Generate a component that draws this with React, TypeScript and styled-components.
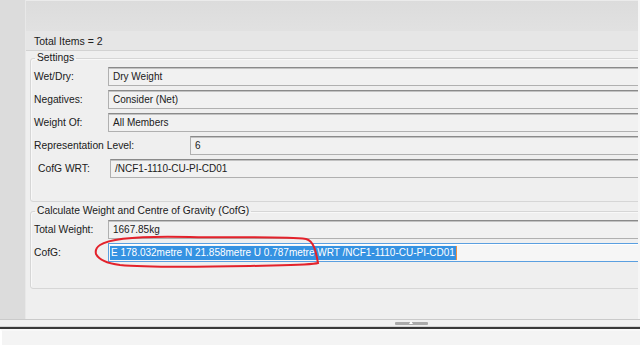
import React from 'react';
import styled, { createGlobalStyle } from 'styled-components';

const GlobalStyle = createGlobalStyle`
  html, body {
    margin: 0;
    padding: 0;
    overflow: hidden;
    background: #efefef;
  }
  body {
    font-family: "Liberation Sans", Arial, sans-serif;
    font-size: 10px;
    color: #202020;
  }
`;

const Window = styled.div`
  position: relative;
  width: 640px;
  height: 345px;
  display: flex;
  flex-direction: column;
  overflow: hidden;
`;

const Upper = styled.div`
  display: flex;
  height: 319px;
  border-bottom: 1px solid #cacaca;
`;

const LeftStrip = styled.div`
  width: 25px;
  background: #dcdcdc;
  border-right: 1px solid #e8e8e8;
`;

const Main = styled.div`
  flex: 1;
  min-width: 0;
  display: flex;
  flex-direction: column;
  overflow: hidden;
  background: #efefef;
  border-right: 2px solid #f6f6f6;
`;

const TopBand = styled.div`
  height: 30px;
  border-top: 1px solid #ebebeb;
  background: linear-gradient(#dcdcdc, #e1e1e1);
`;

const ItemsBar = styled.div`
  height: 19px;
  line-height: 20px;
  padding-left: 8px;
  font-size: 10.5px;
  background: #e6e6e6;
  border-bottom: 1px solid #d2d2d2;
`;

const Body = styled.div`
  padding-left: 4px;
  display: flex;
  flex-direction: column;
`;

interface GroupProps {
  $top: number;
  $bottom: number;
}

const Group = styled.fieldset<GroupProps>`
  width: 660px;
  margin: ${p => p.$top}px 0 0 0;
  padding: 2px 0 ${p => p.$bottom}px 3px;
  border: 1px solid #d6d6d6;
  border-radius: 3px;
  box-shadow: inset 1px 1px 0 #f8f8f8;
`;

const Legend = styled.legend`
  margin-left: 1px;
  padding: 0 2px;
  line-height: 14px;
  font-size: 10.3px;
`;

const Rows = styled.div`
  display: flex;
  flex-direction: column;
  gap: 4px;
`;

const Row = styled.div`
  display: flex;
  align-items: center;
  height: 19px;
`;

interface LabelProps {
  $width: number;
  $indent?: number;
}

const Label = styled.div<LabelProps>`
  width: ${p => p.$width}px;
  margin-left: ${p => p.$indent || 0}px;
  flex-shrink: 0;
  white-space: nowrap;
  font-size: 10.3px;
`;

const TextBox = styled.div`
  flex: 1;
  height: 19px;
  box-sizing: border-box;
  padding-left: 4px;
  line-height: 17px;
  white-space: nowrap;
  background: #f1f1f1;
  border: 1px solid #b0b0b0;
  border-top-color: #8a8a8a;
  box-shadow: inset 0 1px 0 #c2c2c2;
`;

const FocusBox = styled(TextBox)`
  padding-left: 1px;
  background: #f6f6f6;
  border-color: #5a9fe0;
  box-shadow: inset 0 1px 0 #ffffff;
  display: flex;
  align-items: center;
`;

const Selection = styled.span`
  display: inline-block;
  line-height: 14px;
  padding: 0 1px;
  color: #ffffff;
  background: #3592e2;
  border-right: 1px solid #f09040;
`;

const Splitter = styled.div`
  height: 7px;
  display: flex;
  justify-content: center;
  padding-left: 182px;
  box-sizing: border-box;
  background: #f0f0f0;
  border-bottom: 1px solid #d4d4d4;
`;

const Grip = styled.div`
  position: relative;
  width: 33px;
  height: 3px;
  margin-top: 2px;
  background: #aaaaaa;
  border-radius: 1px;
`;

const GripArrow = styled.div`
  position: absolute;
  left: 14px;
  top: -1px;
  width: 0;
  height: 0;
  border-left: 2px solid transparent;
  border-right: 2px solid transparent;
  border-bottom: 3px solid #ffffff;
`;

const DarkRule = styled.div`
  height: 2px;
  background: #383838;
`;

const Bottom = styled.div`
  flex: 1;
  background: #f4f4f4;
  border-top: 2px solid #f8f8f8;
  border-left: 2px solid #ffffff;
`;

const Annotation = styled.svg`
  position: absolute;
  left: 0;
  top: 0;
  pointer-events: none;
`;

const settings = [
  { label: 'Wet/Dry:', value: 'Dry Weight', width: 74, indent: 0 },
  { label: 'Negatives:', value: 'Consider (Net)', width: 74, indent: 0 },
  { label: 'Weight Of:', value: 'All Members', width: 74, indent: 0 },
  { label: 'Representation Level:', value: '6', width: 156, indent: 0 },
  { label: 'CofG WRT:', value: '/NCF1-1110-CU-PI-CD01', width: 72, indent: 4 },
];

export default function App() {
  return (
    <Window>
      <GlobalStyle />
      <Upper>
        <LeftStrip />
        <Main>
          <TopBand />
          <ItemsBar>Total Items = 2</ItemsBar>
          <Body>
            <Group $top={0} $bottom={23}>
              <Legend>Settings</Legend>
              <Rows>
                {settings.map(s => (
                  <Row key={s.label}>
                    <Label $width={s.width} $indent={s.indent}>
                      {s.label}
                    </Label>
                    <TextBox>{s.value}</TextBox>
                  </Row>
                ))}
              </Rows>
            </Group>
            <Group $top={2} $bottom={26}>
              <Legend>Calculate Weight and Centre of Gravity (CofG)</Legend>
              <Rows>
                <Row>
                  <Label $width={74}>Total Weight:</Label>
                  <TextBox>1667.85kg</TextBox>
                </Row>
                <Row>
                  <Label $width={74}>CofG:</Label>
                  <FocusBox>
                    <Selection>
                      E 178.032metre N 21.858metre U 0.787metre WRT /NCF1-1110-CU-PI-CD01
                    </Selection>
                  </FocusBox>
                </Row>
              </Rows>
            </Group>
          </Body>
        </Main>
      </Upper>
      <Splitter>
        <Grip>
          <GripArrow />
        </Grip>
      </Splitter>
      <DarkRule />
      <Bottom />
      <Annotation width="640" height="345" viewBox="0 0 640 345">
        <path
          d="M 100 245 C 112 237, 150 236, 190 237 C 240 238, 285 236, 306 239 C 314 241, 316 252, 318 263 C 312 265, 290 265, 250 266 C 200 267, 150 268, 120 265 C 105 263, 98 258, 96 254 C 95 250, 97 247, 100 245"
          fill="none"
          stroke="#e3222b"
          strokeWidth="2"
          strokeLinecap="round"
        />
      </Annotation>
    </Window>
  );
}
